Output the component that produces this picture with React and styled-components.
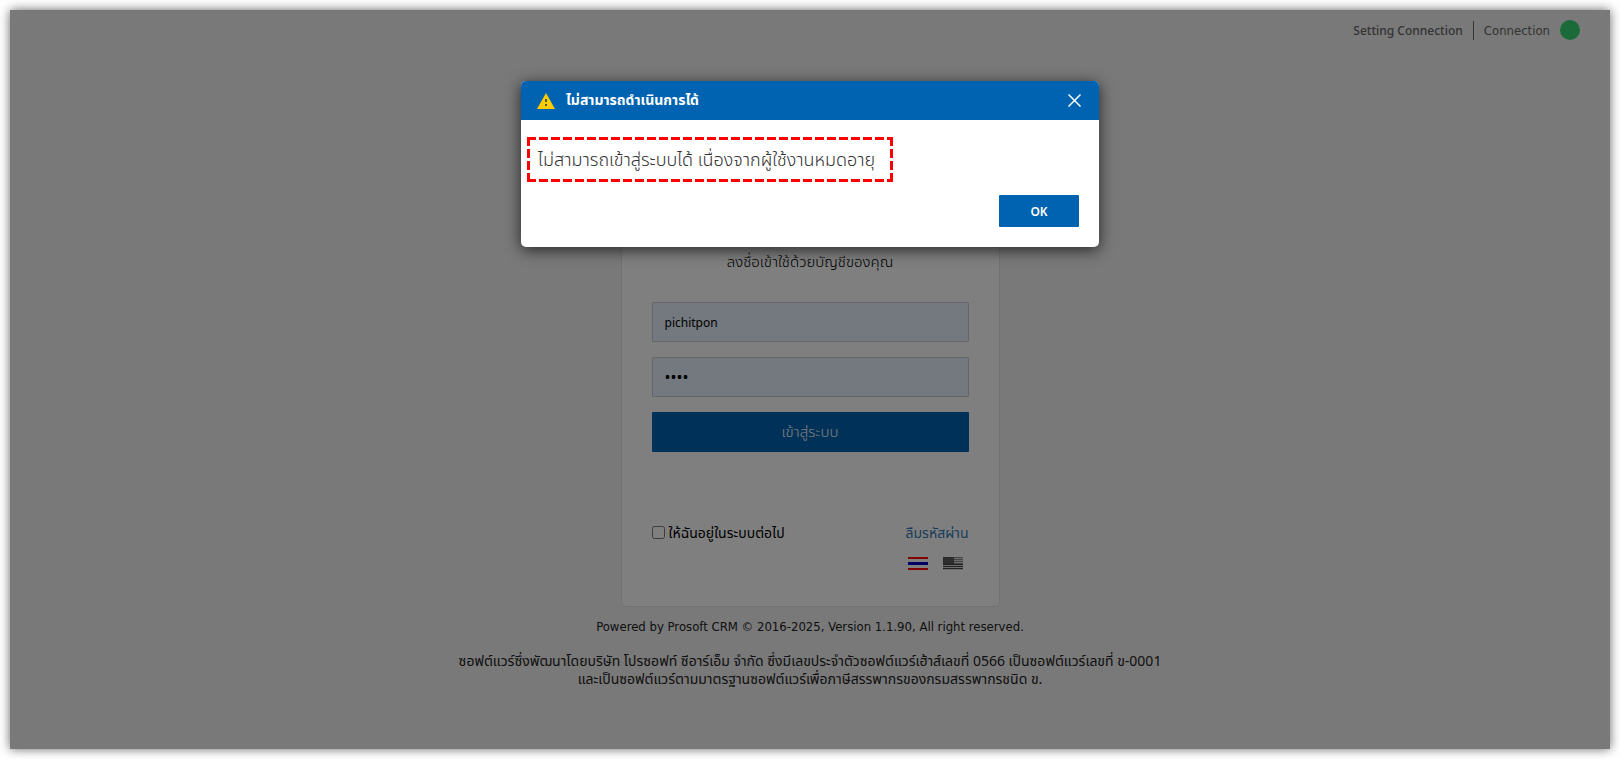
import React, { useState } from 'react';
import styled, { createGlobalStyle } from 'styled-components';

const GlobalStyle = createGlobalStyle`
  * {
    box-sizing: border-box;
  }
  body {
    margin: 0;
    background: #fff;
    color: #333;
    font-family: 'Noto Sans', 'Noto Sans Thai', 'DejaVu Sans', sans-serif;
    font-size: 12px;
  }
  p, h1, h2 {
    margin: 0;
    font-weight: 400;
  }
  button, input {
    font-family: inherit;
  }
  a {
    color: inherit;
    text-decoration: none;
  }
`;

const Screen = styled.div`
  min-height: 100vh;
  padding: 10px;
  display: flex;
`;

const Page = styled.div`
  position: relative;
  flex: 1;
  display: flex;
  flex-direction: column;
  align-items: center;
  background: #f3f3f3;
  box-shadow: 0 0 10px rgba(0, 0, 0, 0.6);
`;

const TopBar = styled.header`
  align-self: stretch;
  display: flex;
  justify-content: flex-end;
  align-items: center;
  gap: 10px;
  padding: 10px 30px 0;
  font-family: 'DejaVu Sans Condensed', 'Noto Sans', sans-serif;
  font-size: 13px;
  line-height: 19px;
  color: #666;
  a {
    padding-right: 10px;
    border-right: 1px solid #666;
    font-family: 'Noto Sans', sans-serif;
    font-size: 12px;
    font-weight: 500;
  }
`;

const Dot = styled.span`
  width: 20px;
  height: 20px;
  border-radius: 50%;
  background: #34d673;
`;

const Card = styled.form`
  width: 379px;
  max-width: 100%;
  margin-top: 65px;
  padding: 142px 30px 36px;
  display: flex;
  flex-direction: column;
  gap: 15px;
  background: #fff;
  border: 1px solid #e5e5e5;
  border-radius: 4px;
`;

const CardTitle = styled.h1`
  margin-bottom: 13px;
  font-size: 15px;
  font-weight: 300;
  line-height: 26px;
  text-align: center;
  color: #000;
`;

const Field = styled.input`
  height: 40px;
  padding: 0 12px;
  color: #000;
  background: #e8f0fe;
  border: 1px solid #ccc;
  border-radius: 1px;
  font-size: 12px;
  &[type='password'] {
    font-size: 16px;
  }
`;

const LoginButton = styled.button`
  height: 40px;
  border: 0;
  border-radius: 1px;
  background: #0063b1;
  color: #fff;
  font-size: 15px;
  font-weight: 300;
`;

const Options = styled.div`
  display: flex;
  justify-content: space-between;
  align-items: center;
  margin-top: 56px;
  font-size: 14px;
  line-height: 19px;
  label {
    display: flex;
    align-items: center;
    gap: 4px;
    color: #000;
  }
  input {
    width: 13px;
    height: 13px;
    margin: 0;
  }
  a {
    color: #337ab7;
  }
`;

const Languages = styled.div`
  display: flex;
  justify-content: flex-end;
  gap: 15px;
  padding: 0 6px;
  button {
    display: flex;
    padding: 0;
    border: 0;
    background: none;
  }
`;

const Footer = styled.footer`
  margin-top: 10px;
  text-align: center;
  line-height: 20px;
  color: #222;
`;

const Copyright = styled.p`
  font-family: 'DejaVu Sans Condensed', 'Noto Sans', sans-serif;
  font-size: 13px;
`;

const License = styled.p`
  margin-top: 15px;
  font-size: 14px;
  line-height: 18px;
`;

const Overlay = styled.div`
  position: absolute;
  inset: 0;
  padding-top: 71px;
  display: flex;
  justify-content: center;
  align-items: flex-start;
  background: rgba(0, 0, 0, 0.5);
`;

const Dialog = styled.section`
  width: 578px;
  max-width: 100%;
  overflow: hidden;
  border-radius: 5px;
  background: #fff;
  box-shadow: 0 3px 15px rgba(0, 0, 0, 0.7);
`;

const DialogHeader = styled.header`
  display: flex;
  align-items: center;
  gap: 11px;
  height: 39px;
  padding: 0 18px 0 16px;
  color: #fff;
  background: #0063b1;
  h2 {
    flex: 1;
    font-size: 14px;
    font-weight: 700;
  }
  button {
    display: flex;
    padding: 0;
    border: 0;
    background: none;
  }
`;

const DialogBody = styled.div`
  display: flex;
  flex-direction: column;
  align-items: flex-start;
  padding: 17px 20px 20px 6px;
`;

const dashX = 'repeating-linear-gradient(90deg, #f00 0 9px, transparent 9px 12px)';
const dashY = 'repeating-linear-gradient(0deg, #f00 0 9px, transparent 9px 12px)';

const Message = styled.p`
  min-width: 366px;
  padding: 8px 11px;
  color: #333;
  font-size: 18px;
  font-weight: 300;
  line-height: 29px;
  background: ${dashX} top / 100% 3px no-repeat,
    ${dashX} bottom / 100% 3px no-repeat,
    ${dashY} left / 3px 100% no-repeat,
    ${dashY} right / 3px 100% no-repeat;
`;

const OkButton = styled.button`
  align-self: flex-end;
  width: 80px;
  height: 32px;
  margin-top: 13px;
  border: 0;
  border-radius: 1px;
  background: #0063b1;
  color: #fff;
  font-size: 12px;
  font-weight: 600;
`;

function WarningIcon() {
  return (
    <svg width='18' height='16' viewBox='0 0 18 16' aria-hidden='true'>
      <path d='M9 0 18 16H0Z' fill='#fc0' />
      <path d='M8 6h2v3H8zM8 11h2v2H8z' fill='#4d5d3c' />
    </svg>
  );
}

function CloseIcon() {
  return (
    <svg width='13' height='14' viewBox='0 0 13 14' aria-hidden='true'>
      <path d='M.5 .5 12.5 12.5M12.5 .5 .5 12.5' stroke='#fff' strokeWidth='1.5' />
    </svg>
  );
}

function ThaiFlag() {
  return (
    <svg width='20' height='13' viewBox='0 0 20 13' aria-hidden='true'>
      <path d='M0 0h20v13H0z' fill='#fff' />
      <path d='M0 0h20v2H0zM0 11h20v2H0z' fill='#f00' />
      <path d='M0 5h20v3H0z' fill='#00c' />
    </svg>
  );
}

function UsFlag() {
  return (
    <svg width='20' height='13' viewBox='0 0 20 13' aria-hidden='true'>
      <path d='M0 0h20v13H0z' fill='#d8d8d8' />
      <path d='M0 0h20v1H0zM0 2h20v1H0zM0 4h20v1H0zM0 6h20v1H0z' fill='#888' />
      <path d='M0 7h20v1H0zM0 9h20v1H0zM0 11h20v1H0z' fill='#444' />
      <path d='M0 0h11v7H0z' fill='#555' />
      <path d='M1 1h9M1 3h9M1 5h9' stroke='#707070' strokeDasharray='1 1' />
    </svg>
  );
}

function ErrorDialog({ onClose }) {
  return (
    <Overlay>
      <Dialog role='dialog' aria-labelledby='dialog-title'>
        <DialogHeader>
          <WarningIcon />
          <h2 id='dialog-title'>ไม่สามารถดำเนินการได้</h2>
          <button type='button' aria-label='Close' onClick={onClose}>
            <CloseIcon />
          </button>
        </DialogHeader>
        <DialogBody>
          <Message>ไม่สามารถเข้าสู่ระบบได้ เนื่องจากผู้ใช้งานหมดอายุ</Message>
          <OkButton type='button' onClick={onClose}>
            OK
          </OkButton>
        </DialogBody>
      </Dialog>
    </Overlay>
  );
}

export default function App() {
  const [isOpen, setIsOpen] = useState(true);
  const handleSubmit = (e) => {
    e.preventDefault();
    setIsOpen(true);
  };
  return (
    <Screen>
      <GlobalStyle />
      <Page>
        <TopBar>
          <a href='#setting'>Setting Connection</a>
          <span>Connection</span>
          <Dot />
        </TopBar>
        <Card onSubmit={handleSubmit}>
          <CardTitle>ลงชื่อเข้าใช้ด้วยบัญชีของคุณ</CardTitle>
          <Field type='text' aria-label='Username' defaultValue='pichitpon' />
          <Field type='password' aria-label='Password' defaultValue='1234' />
          <LoginButton type='submit'>เข้าสู่ระบบ</LoginButton>
          <Options>
            <label htmlFor='remember'>
              <input type='checkbox' id='remember' />
              ให้ฉันอยู่ในระบบต่อไป
            </label>
            <a href='#forgot'>ลืมรหัสผ่าน</a>
          </Options>
          <Languages>
            <button type='button' aria-label='ไทย'>
              <ThaiFlag />
            </button>
            <button type='button' aria-label='English'>
              <UsFlag />
            </button>
          </Languages>
        </Card>
        <Footer>
          <Copyright>Powered by Prosoft CRM © 2016-2025, Version 1.1.90, All right reserved.</Copyright>
          <License>
            ซอฟต์แวร์ซึ่งพัฒนาโดยบริษัท โปรซอฟท์ ซีอาร์เอ็ม จำกัด ซึ่งมีเลขประจำตัวซอฟต์แวร์เฮ้าส์เลขที่ 0566 เป็นซอฟต์แวร์เลขที่ ข-0001
            <br />
            และเป็นซอฟต์แวร์ตามมาตรฐานซอฟต์แวร์เพื่อภาษีสรรพากรของกรมสรรพากรชนิด ข.
          </License>
        </Footer>
        {isOpen && <ErrorDialog onClose={() => setIsOpen(false)} />}
      </Page>
    </Screen>
  );
}
